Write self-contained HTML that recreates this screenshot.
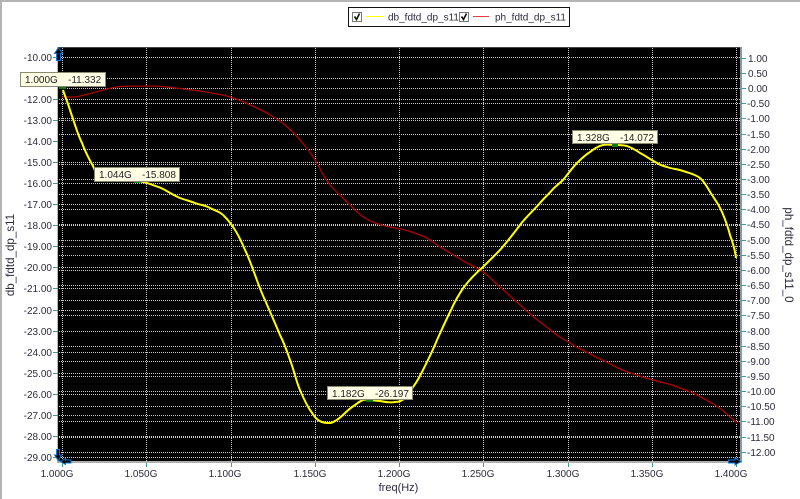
<!DOCTYPE html>
<html><head><meta charset="utf-8"><style>
html,body{margin:0;padding:0;background:#fff;width:800px;height:499px;overflow:hidden}
svg{display:block}
text{font-family:"Liberation Sans",sans-serif;font-size:10px;fill:#2c2c3c}
.l text{text-anchor:end}
.b text{text-anchor:middle}
.m text{fill:#222}
</style></head><body>
<svg width="800" height="499" viewBox="0 0 800 499" xmlns="http://www.w3.org/2000/svg">
<rect width="800" height="499" fill="#fff"/>
<rect x="0" y="0" width="800" height="2" fill="#b4b4b4"/>
<rect x="0" y="0" width="2" height="499" fill="#b4b4b4"/>

<!-- legend -->
<rect x="348.5" y="7.5" width="221" height="19" fill="#fff" stroke="#111"/>
<rect x="352.5" y="12.5" width="9" height="9" fill="#fff" stroke="#777"/>
<path d="M354.5 16.5l2 3 3-6" fill="none" stroke="#111" stroke-width="1.6"/>
<rect x="459.5" y="12.5" width="9" height="9" fill="#fff" stroke="#777"/>
<path d="M461.5 16.5l2 3 3-6" fill="none" stroke="#111" stroke-width="1.6"/>
<line x1="366" x2="383" y1="16.5" y2="16.5" stroke="#ffff00"/>
<line x1="473" x2="489" y1="16.5" y2="16.5" stroke="#e04040"/>
<text x="388" y="20.5">db_fdtd_dp_s11</text>
<text x="495" y="20.5">ph_fdtd_dp_s11</text>

<!-- plot -->
<rect x="58" y="47" width="683" height="415" fill="#000"/>
<rect x="58" y="47" width="683" height="1" fill="#444"/>
<rect x="57" y="47" width="1" height="415" fill="#b8b8b8"/>
<rect x="740" y="47" width="2" height="415" fill="#8a9aa4"/>
<rect x="57" y="461" width="685" height="2" fill="#b0b0b0"/>

<!-- grid -->
<path d="M59 57.5H740M59 78.5H740M59 99.5H740M59 120.5H740M59 162.5H740M59 183.5H740M59 204.5H740M59 225.5H740M59 246.5H740M59 267.5H740M59 288.5H740M59 310.5H740M59 331.5H740M59 352.5H740M59 373.5H740M59 394.5H740M59 415.5H740M59 436.5H740M59 457.5H740" stroke="#cccccc" stroke-dasharray="1 1" fill="none"/>
<path d="M59 88.5H740M59 103.5H740M59 118.5H740M59 134.5H740M59 149.5H740M59 164.5H740M59 179.5H740M59 194.5H740M59 209.5H740M59 224.5H740M59 240.5H740M59 255.5H740M59 270.5H740M59 285.5H740M59 300.5H740M59 315.5H740M59 331.5H740M59 346.5H740M59 361.5H740M59 376.5H740M59 391.5H740M59 406.5H740M59 421.5H740M59 437.5H740M59 452.5H740" stroke="#cccccc" stroke-dasharray="1 1" fill="none"/>
<path d="M62.5 48V461M146.5 48V461M231.5 48V461M315.5 48V461M399.5 48V461M483.5 48V461M568.5 48V461M652.5 48V461M736.5 48V461" stroke="#cccccc" stroke-dasharray="1 1" fill="none"/>

<!-- ticks -->
<path d="M53 57.5H58M53 78.5H58M53 99.5H58M53 120.5H58M53 141.5H58M53 162.5H58M53 183.5H58M53 204.5H58M53 225.5H58M53 246.5H58M53 267.5H58M53 288.5H58M53 310.5H58M53 331.5H58M53 352.5H58M53 373.5H58M53 394.5H58M53 415.5H58M53 436.5H58M53 457.5H58" stroke="#3c9c9c" fill="none"/>
<path d="M741 58.5H746M741 73.5H746M741 88.5H746M741 103.5H746M741 118.5H746M741 134.5H746M741 149.5H746M741 164.5H746M741 179.5H746M741 194.5H746M741 209.5H746M741 224.5H746M741 240.5H746M741 255.5H746M741 270.5H746M741 285.5H746M741 300.5H746M741 315.5H746M741 331.5H746M741 346.5H746M741 361.5H746M741 376.5H746M741 391.5H746M741 406.5H746M741 421.5H746M741 437.5H746M741 452.5H746" stroke="#3c9c9c" fill="none"/>
<path d="M62.5 463V467M146.5 463V467M231.5 463V467M315.5 463V467M399.5 463V467M483.5 463V467M568.5 463V467M652.5 463V467M736.5 463V467" stroke="#3c9c9c" fill="none"/>

<!-- curves (smooth bezier) -->
<path fill="none" stroke="#b00000" stroke-width="1.3" d="M62 97 L76 97 C84 95 92 93 100 91 C107 89 113 87 120 86.5 C130 86 140 86 150 86 C158 86 167 87 175 88 C183 89 192 90 200 91 C210 93 220 94 230 97 C237 99 244 102 250 105 C257 108 264 111 270 115 C275 118 280 121 285 125 C291 130 295 134 300 140 C306 147 310 152 315 160 C320 168 324 178 330 185 C335 191 340 195 345 200 C351 206 358 214 365 218 C371 222 378 224 385 226 C392 228 398 228 405 230 C412 232 418 234 425 237 C432 241 438 246 445 250 C452 254 458 258 465 262 C471 265 477 268 483 272 C489 276 494 282 500 287 C507 293 513 299 520 305 C527 311 533 317 540 322 C547 327 553 333 560 337 C566 341 573 345 580 349 C587 352 593 356 600 359 C607 362 613 366 620 369 C627 372 633 374 640 376 C644 378 649 379 653 380 C659 382 666 383 672 385 C679 388 686 390 693 393 C701 397 708 401 715 405 C723 410 730 417 737 423"/>
<path fill="none" stroke="#ffff00" stroke-width="2" d="M63 90 C65 96 67 101 69 107 C71 113 73 119 75 125 C77 131 79 137 82 143 C85 151 89 159 93 166 C95 170 96 175 100 177 C104 180 110 181 115 181 C122 181 130 180 137 181 C142 182 145 182 150 184 C155 186 160 187 165 190 C170 193 175 196 180 198 C185 200 190 201 195 203 C200 205 205 205 210 208 C216 211 221 212 225 217 C229 221 232 225 235 230 C239 236 242 243 245 250 C249 258 252 267 255 275 C258 283 261 292 265 300 C270 312 275 323 280 335 C284 343 287 351 290 360 C294 370 296 381 300 390 C303 397 306 404 310 410 C313 414 314 417 318 420 C321 422 324 423 328 423 C331 423 332 423 335 421 C339 419 342 416 345 413 C348 410 352 407 355 405 C358 403 360 401 363 400 C365 399 367 400 369 400 C373 400 376 401 380 401 C385 402 390 403 395 402 C399 402 402 401 405 398 C408 395 411 391 413 387 C417 382 420 376 423 370 C428 360 433 350 437 340 C442 329 446 320 451 310 C455 301 459 294 464 287 C470 279 476 273 483 267 C489 261 494 256 500 250 C507 242 514 233 520 225 C526 217 533 211 540 203 C544 198 549 194 553 189 C556 186 560 183 563 180 C568 174 572 168 577 163 C581 159 585 155 590 152 C594 149 598 146 603 145 C607 144 611 145 615 145 C619 145 623 145 627 146 C632 148 636 150 640 153 C646 156 651 160 657 163 C660 165 663 166 667 167 C672 169 678 169 683 171 C689 173 695 174 700 178 C705 182 708 189 712 195 C716 201 719 205 722 212 C725 219 728 227 730 235 C733 243 735 250 736 258"/>

<!-- markers -->
<g fill="#0a7a0a">
<rect x="59" y="86" width="7" height="3"/>
<rect x="134" y="180" width="7" height="3"/>
<rect x="366" y="399" width="7" height="3"/>
<rect x="612" y="144" width="6" height="3"/>
</g>
<g fill="#ffffe6" stroke="#8a8a70">
<rect x="20.5" y="72.5" width="85" height="14"/>
<rect x="94.5" y="167.5" width="85" height="14"/>
<rect x="327.5" y="386.5" width="85" height="13"/>
<rect x="572.5" y="130.5" width="85" height="13"/>
</g>
<g class="m">
<text x="25" y="83">1.000G</text><text x="68" y="83">-11.332</text>
<text x="99" y="178">1.044G</text><text x="142" y="178">-15.808</text>
<text x="332" y="397">1.182G</text><text x="375" y="397">-26.197</text>
<text x="577" y="141">1.328G</text><text x="620" y="141">-14.072</text>
</g>

<!-- arrows -->
<g fill="#000" stroke="#0a74d8" stroke-width="1">
<polygon points="58.5,47.5 62.5,53.5 60.5,53.5 60.5,60.5 56.5,60.5 56.5,53.5 54.5,53.5"/>
<polygon points="58.5,461 54.5,455 56.5,455 56.5,449.5 59.5,449.5 59.5,455 61.5,455"/>
<polygon points="60.5,461.5 65.5,458.5 65.5,460 71,460 71,463 65.5,463 65.5,464.5"/>
<polygon points="741,461.5 735,458 735,460 728.5,460 728.5,463 735,463 735,465"/>
</g>

<!-- left labels -->
<g class="l">
<text x="52" y="61">-10.00</text><text x="52" y="103">-12.00</text><text x="52" y="124">-13.00</text><text x="52" y="145">-14.00</text><text x="52" y="166">-15.00</text><text x="52" y="187">-16.00</text><text x="52" y="208">-17.00</text><text x="52" y="229">-18.00</text><text x="52" y="250">-19.00</text><text x="52" y="271">-20.00</text><text x="52" y="292">-21.00</text><text x="52" y="314">-22.00</text><text x="52" y="335">-23.00</text><text x="52" y="356">-24.00</text><text x="52" y="377">-25.00</text><text x="52" y="398">-26.00</text><text x="52" y="419">-27.00</text><text x="52" y="440">-28.00</text><text x="52" y="461">-29.00</text>
</g>

<!-- right labels -->
<g>
<text x="748" y="62">1.00</text><text x="748" y="77">0.50</text><text x="748" y="92">0.00</text><text x="747" y="107">-0.50</text><text x="747" y="122">-1.00</text><text x="747" y="138">-1.50</text><text x="747" y="153">-2.00</text><text x="747" y="168">-2.50</text><text x="747" y="183">-3.00</text><text x="747" y="198">-3.50</text><text x="747" y="213">-4.00</text><text x="747" y="228">-4.50</text><text x="747" y="244">-5.00</text><text x="747" y="259">-5.50</text><text x="747" y="274">-6.00</text><text x="747" y="289">-6.50</text><text x="747" y="304">-7.00</text><text x="747" y="319">-7.50</text><text x="747" y="335">-8.00</text><text x="747" y="350">-8.50</text><text x="747" y="365">-9.00</text><text x="747" y="380">-9.50</text><text x="747" y="395">-10.00</text><text x="747" y="410">-10.50</text><text x="747" y="425">-11.00</text><text x="747" y="441">-11.50</text><text x="747" y="456">-12.00</text>
</g>

<!-- bottom labels -->
<g class="b">
<text x="57" y="477">1.000G</text><text x="141" y="477">1.050G</text><text x="225" y="477">1.100G</text><text x="310" y="477">1.150G</text><text x="394" y="477">1.200G</text><text x="478" y="477">1.250G</text><text x="563" y="477">1.300G</text><text x="647" y="477">1.350G</text><text x="731" y="477">1.400G</text>
</g>

<text x="398.5" y="491" text-anchor="middle" style="font-size:11px">freq(Hz)</text>
<text transform="translate(14,255) rotate(-90)" text-anchor="middle" style="font-size:11.6px">db_fdtd_dp_s11</text>
<text transform="translate(785,255) rotate(90)" text-anchor="middle" style="font-size:11.6px">ph_fdtd_dp_s11_0</text>
</svg>
</body></html>
